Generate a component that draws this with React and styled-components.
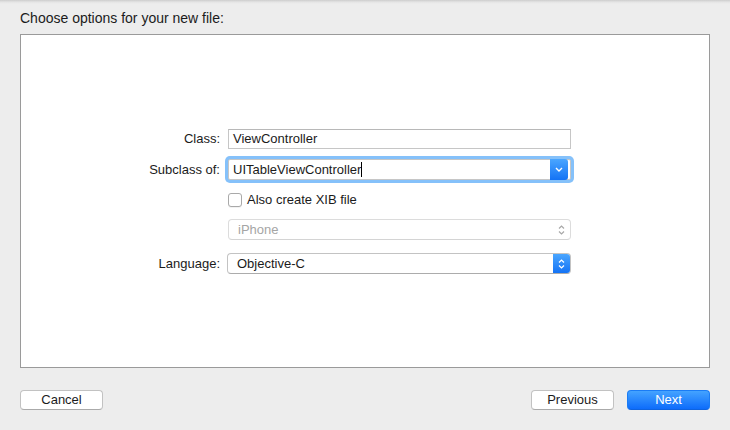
import { createGlobalStyle, styled } from "styled-components"

const GlobalStyle = createGlobalStyle`
    html, body {
        margin: 0;
        padding: 0;
        background: #ededed;
    }
    body {
        font-family: "Helvetica Neue", "Liberation Sans", Arial, sans-serif;
        font-size: 13px;
        color: #1b1b1b;
    }
`

const Sheet = styled.div`
    width: 730px;
    height: 430px;
    display: flex;
    flex-direction: column;
    background: linear-gradient(to bottom, #cdcdcd 0px, #e4e4e4 2px, #ededed 4px, #ededed 100%);
    overflow: hidden;
`

const Title = styled.div`
    height: 24px;
    padding: 10px 0 0 20px;
    font-size: 14px;
    line-height: 16px;
`

const Panel = styled.div`
    margin: 0 20px;
    height: 334px;
    box-sizing: border-box;
    border: 1px solid #9a9a9a;
    background: #fff;
    padding-top: 88px;
`

const Form = styled.div`
    display: grid;
    grid-template-columns: 199px 343px;
    grid-template-rows: 31px 31px 29px 31px 37px;
    column-gap: 8px;
    align-items: center;
`

const Label = styled.div`
    text-align: right;
    line-height: 16px;
`

const TextField = styled.div`
    height: 20px;
    box-sizing: border-box;
    border: 1px solid #c6c6c6;
    border-top-color: #b8b8b8;
    padding: 0 4px;
    line-height: 18px;
    background: #fff;
`

const Combo = styled.div`
    position: relative;
    height: 21px;
    box-sizing: border-box;
    border: 1px solid #c6c6c6;
    border-radius: 2px;
    background: #fff;
    padding: 0 4px;
    line-height: 19px;
    box-shadow: 0 0 0 3px #85c1fa;
`

const Caret = styled.span`
    display: inline-block;
    width: 1px;
    height: 15px;
    background: #000;
    vertical-align: -3px;
`

const ComboButton = styled.div`
    position: absolute;
    top: -1px;
    right: 2px;
    width: 18px;
    height: 21px;
    border-radius: 0 3px 3px 0;
    background: linear-gradient(to bottom, #4aa6ff, #1473f5);
    display: flex;
    align-items: center;
    justify-content: center;
`

const CheckRow = styled.label`
    display: flex;
    align-items: center;
    gap: 5px;
    line-height: 16px;
`

const Box = styled.span`
    width: 12px;
    height: 12px;
    border: 1px solid #a9a9a9;
    border-radius: 3px;
    background: #fff;
    box-shadow: 0 1px 0 rgba(0, 0, 0, 0.05);
`

const Popup = styled.div`
    display: flex;
    align-items: center;
    justify-content: space-between;
    height: 21px;
    box-sizing: border-box;
    border: 1px solid ${p => (p.$disabled ? "#dcdcdc" : "#c3c3c3")};
    border-bottom-color: ${p => (p.$disabled ? "#d4d4d4" : "#acacac")};
    border-radius: 4px;
    background: #fff;
    color: ${p => (p.$disabled ? "#a5a5a5" : "#1b1b1b")};
    padding-left: 9px;
    line-height: 19px;
    overflow: hidden;
    margin-left: ${p => (p.$disabled ? "0" : "-1px")};
`

const Stepper = styled.div`
    width: 17px;
    height: 100%;
    display: flex;
    align-items: center;
    justify-content: center;
    background: ${p => (p.$active ? "linear-gradient(to bottom, #4aa6ff, #1473f5)" : "transparent")};
`

const Footer = styled.div`
    display: flex;
    align-items: center;
    gap: 13px;
    padding: 22px 20px 0 20px;
`

const Button = styled.button`
    width: 83px;
    height: 20px;
    box-sizing: border-box;
    font-family: inherit;
    font-size: 13px;
    line-height: 18px;
    padding: 0;
    border-radius: 4px;
    border: 1px solid ${p => (p.$primary ? "#1a7cf5" : "#c2c2c2")};
    border-bottom-color: ${p => (p.$primary ? "#0e63e0" : "#aaaaaa")};
    background: ${p => (p.$primary ? "linear-gradient(to bottom, #44a3ff, #0d6cfb)" : "#fff")};
    color: ${p => (p.$primary ? "#fff" : "#1b1b1b")};
`

const Spacer = styled.div`
    flex: 1;
`

function ChevronDown() {
    return (
        <svg width="8" height="5" viewBox="0 0 8 5">
            <path d="M1 1 L4 4 L7 1" stroke="#fff" strokeWidth="1.4" fill="none" />
        </svg>
    )
}

function UpDown({ color }) {
    return (
        <svg width="7" height="12" viewBox="0 0 7 12">
            <path d="M1 4.5 L3.5 2 L6 4.5 M1 7.5 L3.5 10 L6 7.5" stroke={color} strokeWidth="1.2" fill="none" />
        </svg>
    )
}

export default function App() {
    return (
        <Sheet>
            <GlobalStyle />
            <Title>Choose options for your new file:</Title>
            <Panel>
                <Form>
                    <Label>Class:</Label>
                    <TextField>ViewController</TextField>

                    <Label>Subclass of:</Label>
                    <Combo>
                        UITableViewController<Caret />
                        <ComboButton>
                            <ChevronDown />
                        </ComboButton>
                    </Combo>

                    <div />
                    <CheckRow>
                        <Box />
                        Also create XIB file
                    </CheckRow>

                    <div />
                    <Popup $disabled>
                        iPhone
                        <Stepper>
                            <UpDown color="#a8a8a8" />
                        </Stepper>
                    </Popup>

                    <Label>Language:</Label>
                    <Popup>
                        Objective-C
                        <Stepper $active>
                            <UpDown color="#fff" />
                        </Stepper>
                    </Popup>
                </Form>
            </Panel>
            <Footer>
                <Button>Cancel</Button>
                <Spacer />
                <Button>Previous</Button>
                <Button $primary>Next</Button>
            </Footer>
        </Sheet>
    )
}
